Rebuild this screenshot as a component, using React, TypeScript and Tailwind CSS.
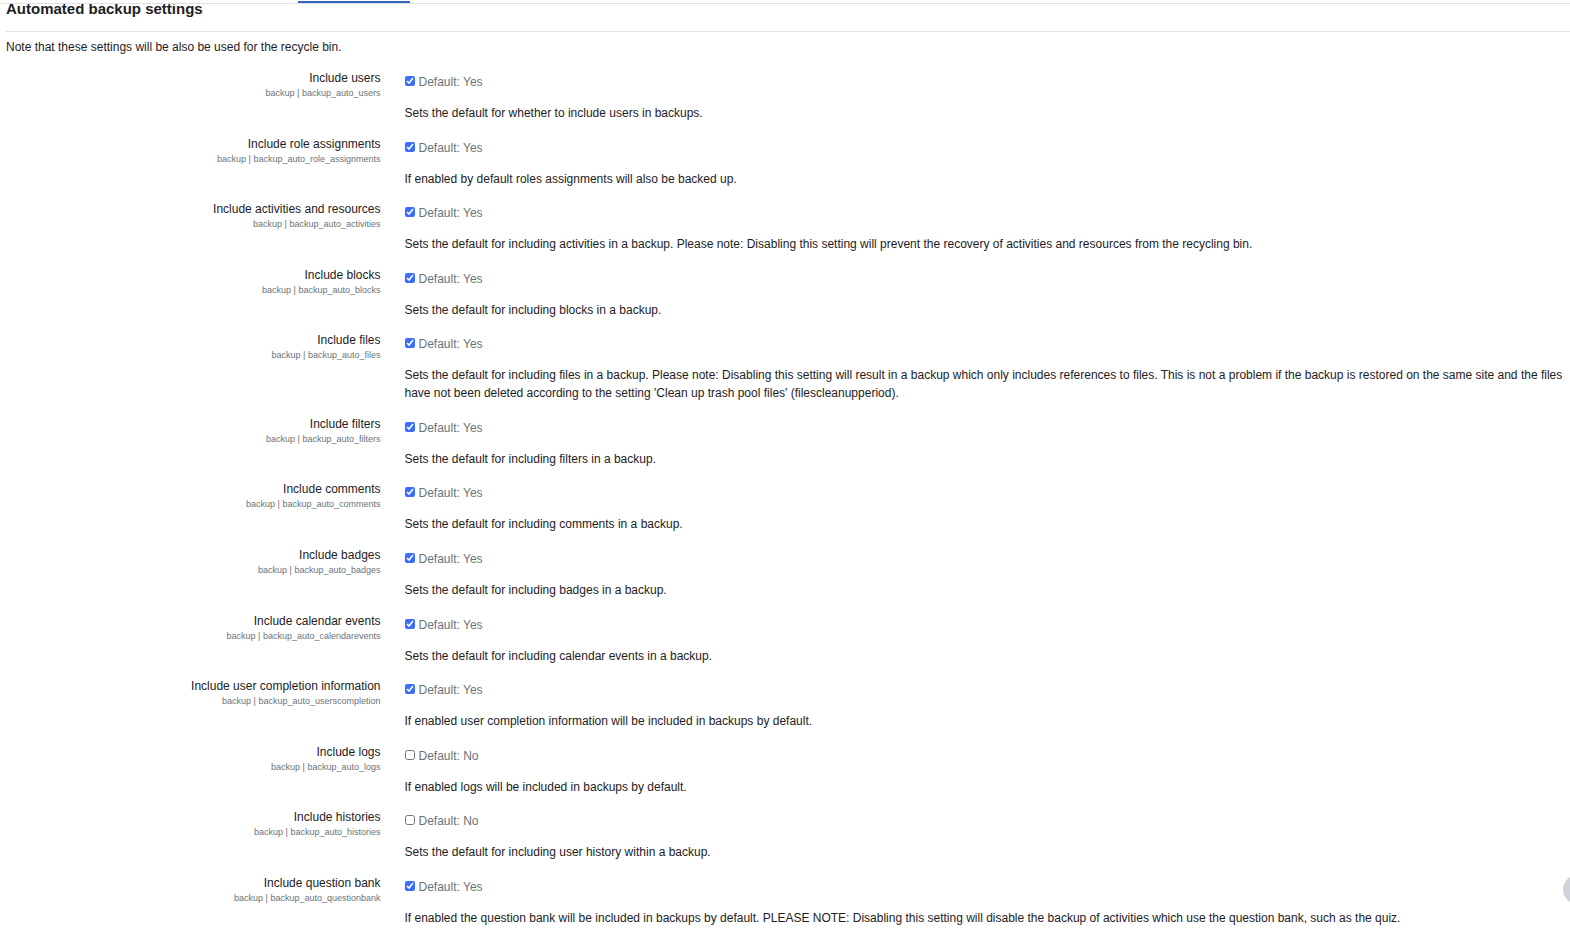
import React, { useState } from 'react';

interface Setting {
  name: string;
  label: string;
  defaultOn: boolean;
  description: string;
}

const SETTINGS: Setting[] = [
  { name: 'backup_auto_users', label: 'Include users', defaultOn: true, description: 'Sets the default for whether to include users in backups.' },
  { name: 'backup_auto_role_assignments', label: 'Include role assignments', defaultOn: true, description: 'If enabled by default roles assignments will also be backed up.' },
  { name: 'backup_auto_activities', label: 'Include activities and resources', defaultOn: true, description: 'Sets the default for including activities in a backup. Please note: Disabling this setting will prevent the recovery of activities and resources from the recycling bin.' },
  { name: 'backup_auto_blocks', label: 'Include blocks', defaultOn: true, description: 'Sets the default for including blocks in a backup.' },
  { name: 'backup_auto_files', label: 'Include files', defaultOn: true, description: "Sets the default for including files in a backup. Please note: Disabling this setting will result in a backup which only includes references to files. This is not a problem if the backup is restored on the same site and the files have not been deleted according to the setting 'Clean up trash pool files' (filescleanupperiod)." },
  { name: 'backup_auto_filters', label: 'Include filters', defaultOn: true, description: 'Sets the default for including filters in a backup.' },
  { name: 'backup_auto_comments', label: 'Include comments', defaultOn: true, description: 'Sets the default for including comments in a backup.' },
  { name: 'backup_auto_badges', label: 'Include badges', defaultOn: true, description: 'Sets the default for including badges in a backup.' },
  { name: 'backup_auto_calendarevents', label: 'Include calendar events', defaultOn: true, description: 'Sets the default for including calendar events in a backup.' },
  { name: 'backup_auto_userscompletion', label: 'Include user completion information', defaultOn: true, description: 'If enabled user completion information will be included in backups by default.' },
  { name: 'backup_auto_logs', label: 'Include logs', defaultOn: false, description: 'If enabled logs will be included in backups by default.' },
  { name: 'backup_auto_histories', label: 'Include histories', defaultOn: false, description: 'Sets the default for including user history within a backup.' },
  { name: 'backup_auto_questionbank', label: 'Include question bank', defaultOn: true, description: 'If enabled the question bank will be included in backups by default. PLEASE NOTE: Disabling this setting will disable the backup of activities which use the question bank, such as the quiz.' },
];

const SettingRow: React.FC<{ setting: Setting }> = ({ setting }) => {
  const [checked, setChecked] = useState(setting.defaultOn);

  return (
    <div className="grid grid-cols-4">
      <div className="px-3 text-right">
        <label htmlFor={setting.name} className="block">{setting.label}</label>
        <span className="block text-[9px] leading-3 text-[#6a737b]">backup | {setting.name}</span>
      </div>
      <div className="col-span-3 pt-1 pl-3 pr-1">
        <div className="flex items-start gap-1 text-[#6a737b]">
          <input
            id={setting.name}
            type="checkbox"
            checked={checked}
            onChange={(e) => setChecked(e.target.checked)}
            className="mt-[3px] size-[10px] accent-[#3b6cff]"
          />
          <span>Default: {setting.defaultOn ? 'Yes' : 'No'}</span>
        </div>
        <p className="mt-[13px]">{setting.description}</p>
      </div>
    </div>
  );
};

const App: React.FC = () => (
  <div className="flex min-h-screen flex-col overflow-x-hidden bg-white pb-px font-['Liberation_Sans',Arial,sans-serif] text-[12px] leading-[18px] text-[#1d2125]">
    {/* Bottom edge of the sticky navigation */}
    <header className="fixed inset-x-0 top-0 z-10 flex h-1 items-end border-b border-[#dee2e6]">
      <div className="ml-[298px] h-[2px] w-28 bg-[#3468bf]" />
    </header>

    <div className="ml-[6px]">
      <h3 className="border-b border-[#dee2e6] pb-[13px] text-[15px] leading-[18px] font-bold">Automated backup settings</h3>
      <p className="mt-[6px]">Note that these settings will be also be used for the recycle bin.</p>
    </div>

    <form className="mt-[13px] flex flex-1 flex-col justify-between">
      {SETTINGS.map((s) => (
        <SettingRow key={s.name} setting={s} />
      ))}
    </form>

    <button type="button" aria-label="Help" className="fixed -right-[22px] bottom-6 size-[29px] rounded-full bg-[#ced4da]" />
  </div>
);

export default App;
